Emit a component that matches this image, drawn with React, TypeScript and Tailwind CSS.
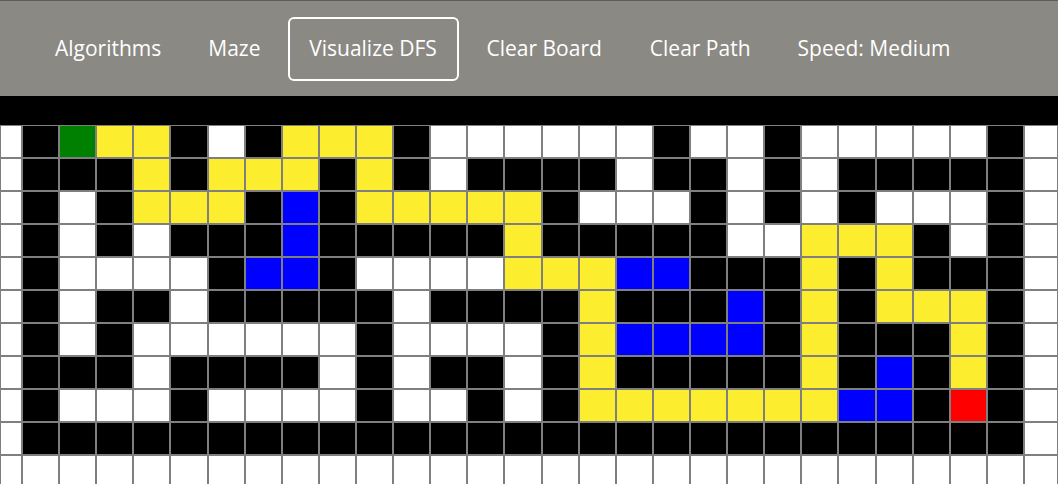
import type { FC, ReactElement } from 'react';

// W = empty, B = wall, S = start, E = end, Y = path, V = visited
const board: string[] = [
    'WBSYYBWBYYYBWWWWWWBWWBWWWWWBW',
    'WBBBYBYYYBYBWBBBBWBBWBWBBBBBW',
    'WBWBYYYBVBYYYYYBWWWBWBWBWWWBW',
    'WBWBWBBBVBBBBBYBBBBBWWYYYBWBW',
    'WBWWWWBVVBWWWWYYYVVBBBYBYBBBW',
    'WBWBBWBBBBBWBBBBYBBBVBYBYYYBW',
    'WBWBWWWWWWBWWWWBYVVVVBYBBBYBW',
    'WBBBWBBBBWBWBBWBYBBBBBYBVBYBW',
    'WBWWWBWWWWBWWBWBYYYYYYYVVBEBW',
    'WBBBBBBBBBBBBBBBBBBBBBBBBBBBW',
    'WWWWWWWWWWWWWWWWWWWWWWWWWWWWW',
];

const cellColor: Record<string, string> = {
    W: 'bg-white',
    B: 'bg-black',
    S: 'bg-[#008000]',
    E: 'bg-[#ff0000]',
    Y: 'bg-[#fcee2e]',
    V: 'bg-[#0000ff]',
};

const NavBar: FC = (): ReactElement => (
    <nav className="h-[96px] bg-[#8b8983] border-t border-[#5c5c5c] flex items-center pl-[55px] text-white text-[21px]">
        <button>Algorithms</button>
        <button className="ml-[47px]">Maze</button>
        <button className="ml-[27px] w-[171px] h-[64px] border-2 border-white rounded-[6px]">Visualize DFS</button>
        <button className="ml-[28px]">Clear Board</button>
        <button className="ml-[48px]">Clear Path</button>
        <button className="ml-[47px]">Speed: Medium</button>
    </nav>
);

const Board: FC = (): ReactElement => (
    <div className="grid grid-cols-[22px_repeat(27,37.11px)_1fr] auto-rows-[33px]">
        {board.map((row, r) =>
            row.split('').map((c, i) => (
                <div key={`${r}-${i}`} className={`border border-[#7f7f7f] ${cellColor[c]}`} />
            ))
        )}
    </div>
);

export default function App(): ReactElement {
    return (
        <div className="w-[1058px] overflow-hidden bg-white" style={{ fontFamily: '"Open Sans", "Noto Sans", sans-serif' }}>
            <NavBar />
            <div className="h-[29px] bg-black" />
            <Board />
        </div>
    );
}
